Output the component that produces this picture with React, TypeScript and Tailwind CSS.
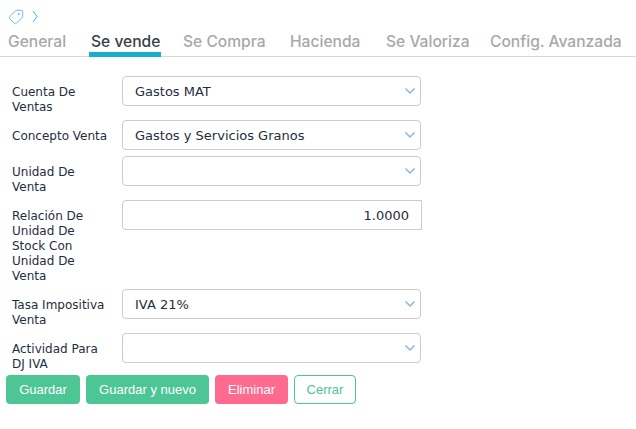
import { Tag } from "lucide-react";

const tabs = [
  { name: "General", width: "w-[58px]" },
  { name: "Se vende", width: "w-[68px]" },
  { name: "Se Compra", width: "w-[82px]" },
  { name: "Hacienda", width: "w-[71px]" },
  { name: "Se Valoriza", width: "w-[79px]" },
  { name: "Config. Avanzada", width: "w-[131px]" },
];

const rows = [
  { label: "Cuenta De Ventas", value: "Gastos MAT" },
  { label: "Concepto Venta", value: "Gastos y Servicios Granos" },
  { label: "Unidad De Venta", value: "" },
  { label: "Relación De Unidad De Stock Con Unidad De Venta", value: "1.0000", input: true },
  { label: "Tasa Impositiva Venta", value: "IVA 21%" },
  { label: "Actividad Para DJ IVA", value: "" },
];

export default function App() {
  return (
    <div className="w-[636px] h-[429px] bg-white overflow-hidden font-['DejaVu_Sans',sans-serif] text-[13px] leading-[15px] text-[#1f2d3d]">
      {/* Breadcrumb */}
      <div className="flex items-center h-[15px] pl-[8px] mt-[9px] gap-[8px] text-[#4aa8f0]">
        <Tag size={16} strokeWidth={1.25} className="-scale-x-100" />
        <svg width="6" height="13" viewBox="0 0 6 13" fill="none" stroke="currentColor" strokeWidth="1">
          <path d="M1 1l4 5.5-4 5.5" />
        </svg>
      </div>

      {/* Tabs */}
      <div className="flex h-[25px] mt-[8px] pl-[6px] border-b border-[#d9d9d9] font-['Inter',sans-serif] text-[15.6px] leading-[20px] font-medium text-[#a8a8a8]">
        {tabs.map((tab) => (
          <div
            key={tab.name}
            className={
              tab.name === "Se vende"
                ? `${tab.width} shrink-0 box-content h-[20px] px-[2px] mr-[20px] whitespace-nowrap border-b-[5px] border-[#17aecf] text-[#3a3f45]`
                : `${tab.width} shrink-0 box-content px-[2px] mr-[21px] whitespace-nowrap`
            }
          >
            {tab.name}
          </div>
        ))}
      </div>

      {/* Form */}
      <div className="mt-[19px]">
        {rows.map((row) => (
          <div key={row.label} className="flex items-start">
            <div className="w-[122px] shrink-0 pl-[12px] pr-[14px] pt-[9px] pb-[5px] text-[12px]">{row.label}</div>
            {row.input ? (
              <div className="w-[300px] h-[30px] border border-[#ccc] rounded-l-[4px] flex items-center justify-end pr-[12px]">
                {row.value}
              </div>
            ) : (
              <div className="w-[299px] h-[30px] border border-[#ccc] rounded-[4px] flex items-center pl-[12px] pr-[4px] mb-[6px]">
                <span className="flex-1">{row.value}</span>
                <svg width="12" height="8" viewBox="0 0 12 8" fill="none" stroke="#8db4e2" strokeWidth="1.5">
                  <path d="M1.5 1.5L6 6l4.5-4.5" />
                </svg>
              </div>
            )}
          </div>
        ))}
      </div>

      {/* Actions */}
      <div className="flex gap-[6px] ml-[6px] -mt-[2px] font-['Liberation_Sans',sans-serif] text-[13px]">
        <button className="w-[74px] h-[29px] rounded-[4px] bg-[#4dc595] text-white">Guardar</button>
        <button className="w-[123px] h-[29px] rounded-[4px] bg-[#4dc595] text-white">Guardar y nuevo</button>
        <button className="w-[73px] h-[29px] rounded-[4px] bg-[#ff6b8f] text-white">Eliminar</button>
        <button className="w-[62px] h-[29px] rounded-[4px] border border-[#4dc595] text-[#4dc595]">Cerrar</button>
      </div>
    </div>
  );
}
